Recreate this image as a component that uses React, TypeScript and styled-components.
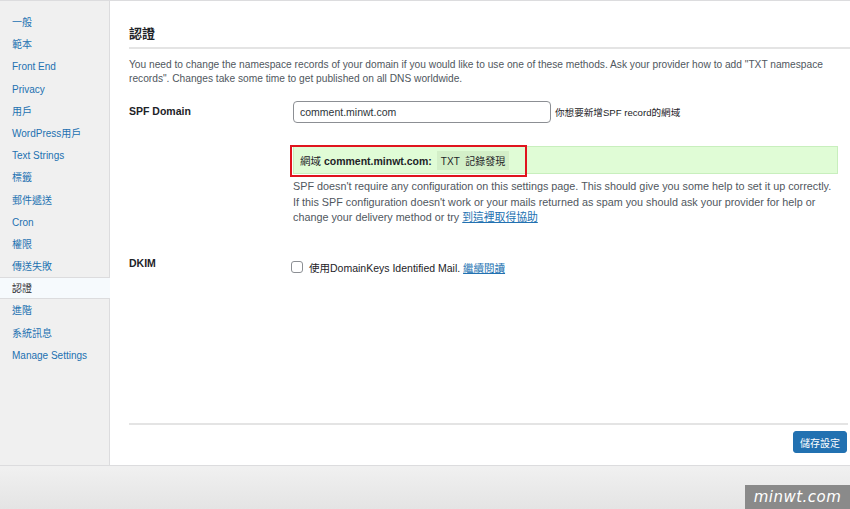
import styled, { createGlobalStyle } from 'styled-components'

const GlobalStyle = createGlobalStyle`
  html, body {
    margin: 0;
    padding: 0;
    background: #f0f0f0;
  }
  body {
    font-family: "Liberation Sans", "Noto Sans CJK TC", sans-serif;
    color: #1d2327;
  }
`

const Page = styled.div`
  width: 850px;
  height: 509px;
  position: relative;
  overflow: hidden;
  display: flex;
  flex-direction: column;
  background: linear-gradient(#f0f0f0 0%, #f0f0f0 92%, #e4e4e4 100%);
`

const Top = styled.div`
  height: 466px;
  display: flex;
  border-top: 1px solid #dcdcde;
  border-bottom: 1px solid #dcdcde;
  box-sizing: border-box;
`

const Sidebar = styled.nav`
  width: 110px;
  flex-shrink: 0;
  background: #f0f0f0;
  border-right: 1px solid #dcdcde;
  box-sizing: border-box;
  padding-top: 10px;
  display: flex;
  flex-direction: column;
`

const NavItem = styled.a<{ $active?: boolean }>`
  display: block;
  height: 22.2px;
  line-height: 22px;
  padding-left: 12px;
  font-size: 10px;
  color: ${(p) => (p.$active ? '#1d2327' : '#2271b1')};
  background: ${(p) => (p.$active ? '#f6fafd' : 'transparent')};
  border-top: 1px solid ${(p) => (p.$active ? '#dcdcde' : 'transparent')};
  border-bottom: 1px solid ${(p) => (p.$active ? '#dcdcde' : 'transparent')};
  margin-right: ${(p) => (p.$active ? '-1px' : '0')};
  box-sizing: border-box;
  text-decoration: none;
  white-space: nowrap;
`

const Main = styled.main`
  flex: 1;
  background: #fff;
  padding: 22px 2px 0 19px;
  display: flex;
  flex-direction: column;
`

const Heading = styled.h2`
  margin: 0;
  font-size: 13px;
  font-weight: 700;
  padding-bottom: 5px;
  border-bottom: 2px solid #e4e4e4;
  margin-right: -2px;
`

const Intro = styled.p`
  margin: 9px 0 0;
  font-size: 10.2px;
  line-height: 14px;
  color: #50575e;
  width: 700px;
`

const FormRow = styled.div<{ $top: number }>`
  display: grid;
  grid-template-columns: 164px 1fr;
  margin-top: ${(p) => p.$top}px;
`

const Label = styled.div<{ $pt: number }>`
  font-size: 10.5px;
  font-weight: 700;
  padding-top: ${(p) => p.$pt}px;
`

const Field = styled.div`
  display: flex;
  flex-direction: column;
`

const InputLine = styled.div`
  display: flex;
  align-items: center;
  gap: 4px;
`

const TextInput = styled.div`
  width: 258px;
  height: 22px;
  border: 1px solid #8c8f94;
  border-radius: 4px;
  box-sizing: border-box;
  padding-left: 6px;
  font-size: 10.5px;
  line-height: 20px;
  color: #2c3338;
`

const Hint = styled.span`
  font-size: 9.6px;
  color: #1d2327;
`

const Notice = styled.div`
  margin-top: 23px;
  margin-right: 10px;
  height: 28px;
  background: #e0fcd6;
  border: 1px solid #c8efbd;
  box-sizing: border-box;
  display: flex;
  align-items: center;
  padding-left: 6px;
  font-size: 10.5px;
  position: relative;
`

const Code = styled.code`
  font-family: "Liberation Sans", "Noto Sans CJK TC", sans-serif;
  background: #d3efc8;
  padding: 2px 4px;
  margin-left: 5px;
  font-size: 10px;
`

const Annotation = styled.div`
  position: absolute;
  left: -4px;
  top: -2px;
  width: 237px;
  height: 32px;
  border: 2px solid #e0141e;
  box-sizing: border-box;
`

const Help = styled.p`
  margin: 5px 0 0;
  font-size: 10.8px;
  line-height: 15.6px;
  color: #50575e;
  width: 540px;
`

const Link = styled.a`
  display: inline-block;
  line-height: 13px;
  color: #2271b1;
  text-decoration: underline;
`

const CheckLine = styled.label`
  display: flex;
  align-items: center;
  gap: 6px;
  font-size: 10.5px;
  color: #1d2327;
  padding-top: 6px;
`

const Box = styled.span`
  width: 12px;
  height: 12px;
  border: 1px solid #8c8f94;
  border-radius: 3px;
  box-sizing: border-box;
  margin-left: -2px;
  background: #fff;
`

const Footer = styled.div`
  margin-top: auto;
  margin-bottom: 12px;
  border-top: 2px solid #e4e4e4;
  padding-top: 6px;
  display: flex;
  justify-content: flex-end;
`

const SaveButton = styled.button`
  font-family: "Liberation Sans", "Noto Sans CJK TC", sans-serif;
  background: #2271b1;
  color: #fff;
  border: 1px solid #2271b1;
  border-radius: 3px;
  height: 22px;
  padding: 0 6px;
  font-size: 10px;
  margin-right: 1px;
`

const Watermark = styled.div`
  position: absolute;
  right: 0;
  bottom: 0;
  width: 105px;
  height: 24px;
  background: #8a8a8a;
  color: #fff;
  font-family: "DejaVu Sans", sans-serif;
  font-style: italic;
  font-size: 15px;
  letter-spacing: 0.5px;
  display: flex;
  align-items: center;
  justify-content: center;
`

const navItems = [
  '一般', '範本', 'Front End', 'Privacy', '用戶', 'WordPress用戶', 'Text Strings',
  '標籤', '郵件遞送', 'Cron', '權限', '傳送失敗', '認證', '進階', '系統訊息', 'Manage Settings',
]

export default function App() {
  return (
    <Page>
      <GlobalStyle />
      <Top>
        <Sidebar>
          {navItems.map((item) => (
            <NavItem key={item} $active={item === '認證'}>{item}</NavItem>
          ))}
        </Sidebar>
        <Main>
          <Heading>認證</Heading>
          <Intro>
            You need to change the namespace records of your domain if you would like to use one of these methods. Ask your provider how to add "TXT namespace records". Changes take some time to get published on all DNS worldwide.
          </Intro>
          <FormRow $top={15}>
            <Label $pt={4}>SPF Domain</Label>
            <Field>
              <InputLine>
                <TextInput>comment.minwt.com</TextInput>
                <Hint>你想要新增SPF record的網域</Hint>
              </InputLine>
              <Notice>
                <span>網域 <b>comment.minwt.com:</b></span>
                <Code>TXT&nbsp; 記錄發現</Code>
                <Annotation />
              </Notice>
              <Help>
                SPF doesn't require any configuration on this settings page. This should give you some help to set it up correctly. If this SPF configuration doesn't work or your mails returned as spam you should ask your provider for help or change your delivery method or try <Link>到這裡取得協助</Link>
              </Help>
            </Field>
          </FormRow>
          <FormRow $top={28}>
            <Label $pt={3}>DKIM</Label>
            <CheckLine>
              <Box />
              <span>使用DomainKeys Identified Mail. <Link>繼續閱讀</Link></span>
            </CheckLine>
          </FormRow>
          <Footer>
            <SaveButton>儲存設定</SaveButton>
          </Footer>
        </Main>
      </Top>
      <Watermark>minwt.com</Watermark>
    </Page>
  )
}
